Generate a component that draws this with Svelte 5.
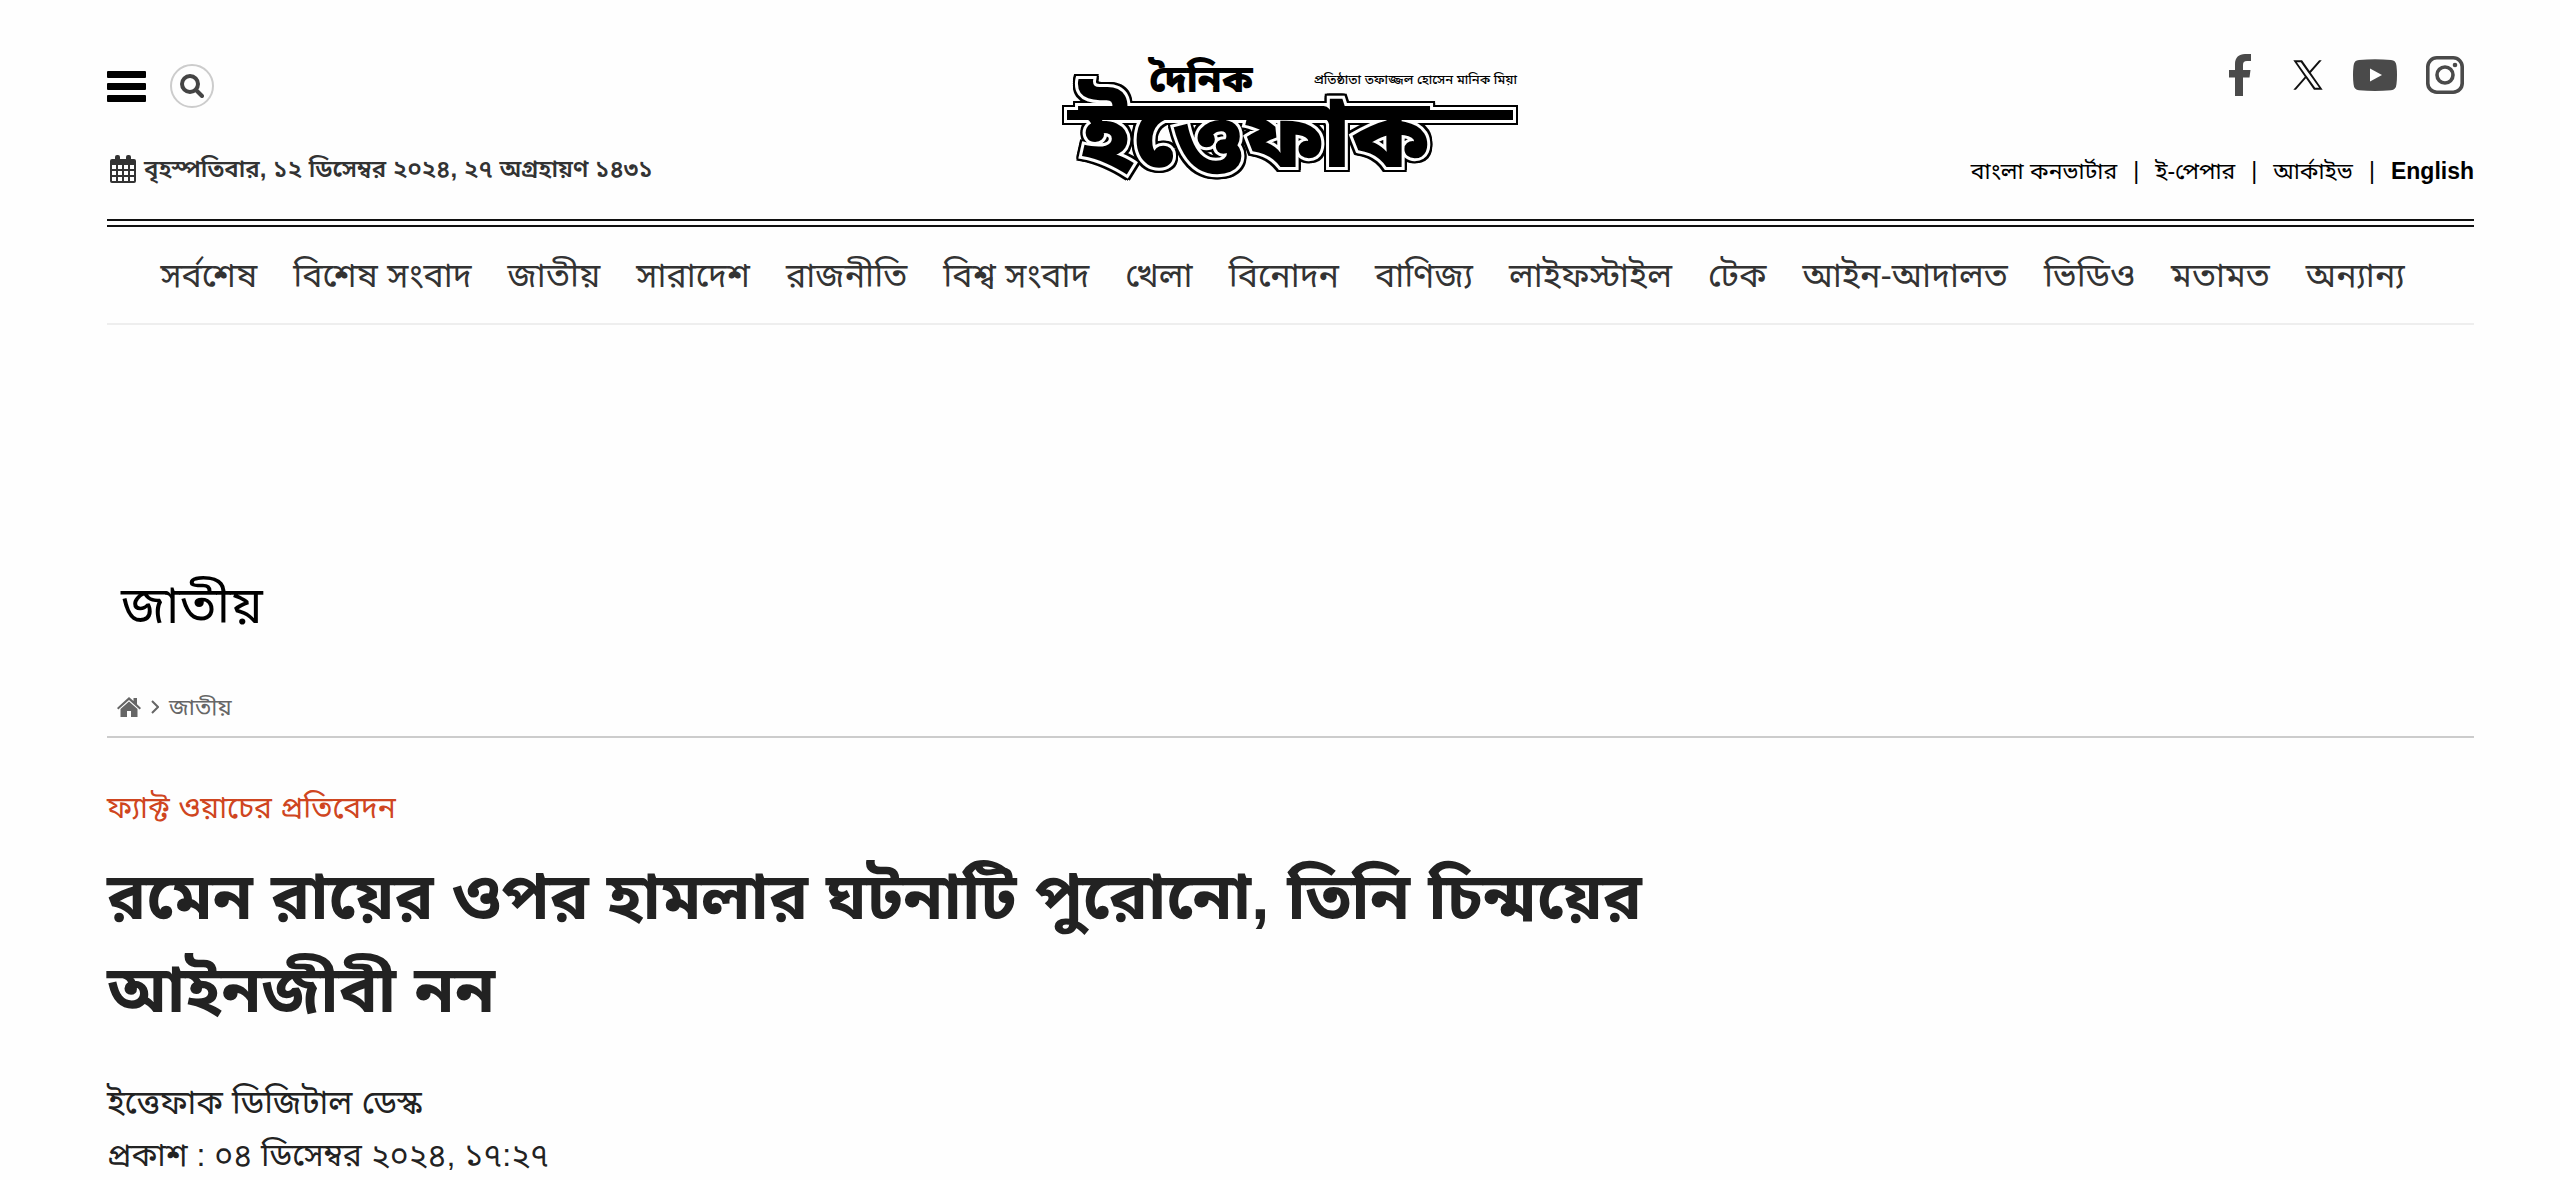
<script lang="ts">
  const navItems = [
    'সর্বশেষ', 'বিশেষ সংবাদ', 'জাতীয়', 'সারাদেশ', 'রাজনীতি',
    'বিশ্ব সংবাদ', 'খেলা', 'বিনোদন', 'বাণিজ্য', 'লাইফস্টাইল',
    'টেক', 'আইন-আদালত', 'ভিডিও', 'মতামত', 'অন্যান্য'
  ];

  const topLinks = ['বাংলা কনভার্টার', 'ই-পেপার', 'আর্কাইভ'];
</script>

<div class="page">
  <header class="masthead">
    <div class="tools">
      <div class="controls">
        <button class="menu" aria-label="মেনু">
          <span></span><span></span><span></span>
        </button>
        <button class="search" aria-label="অনুসন্ধান">
          <svg viewBox="0 0 24 24" width="24" height="24">
            <circle cx="10" cy="10" r="8" fill="none" stroke="#444" stroke-width="4" />
            <path d="M16 16 L22 22" stroke="#444" stroke-width="4" stroke-linecap="round" />
          </svg>
        </button>
      </div>
      <p class="today">
        <svg viewBox="0 0 26 28" width="26" height="28" fill="#333">
          <path fill-rule="evenodd" d="M2 4h3V2a2 2 0 0 1 2-2h1a2 2 0 0 1 2 2v2h6V2a2 2 0 0 1 2-2h1a2 2 0 0 1 2 2v2h3a2 2 0 0 1 2 2v20a2 2 0 0 1-2 2H2a2 2 0 0 1-2-2V6a2 2 0 0 1 2-2zM2 10v4h4v-4zM8 10v4h4v-4zM14 10v4h4v-4zM20 10v4h4v-4zM2 16v4h4v-4zM8 16v4h4v-4zM14 16v4h4v-4zM20 16v4h4v-4zM2 22v4h4v-4zM8 22v4h4v-4zM14 22v4h4v-4zM20 22v4h4v-4z" />
        </svg>
        <span>বৃহস্পতিবার, ১২ ডিসেম্বর ২০২৪, ২৭ অগ্রহায়ণ ১৪৩১</span>
      </p>
    </div>

    <a class="logo" href="/" aria-label="দৈনিক ইত্তেফাক">
      <svg viewBox="0 0 460 110" width="460" height="110">
        <text class="daily" x="88" y="26">দৈনিক</text>
        <text class="founder" x="456" y="18" text-anchor="end">প্রতিষ্ঠাতা তফাজ্জল হোসেন মানিক মিয়া</text>
        <g class="outlined">
          <path class="bar" d="M6 44H452V54H6z" />
          <text class="name" x="18" y="101">ইত্তেফাক</text>
          <path d="M6 44H452V54H6z" />
        </g>
      </svg>
    </a>

    <div class="links">
      <div class="social">
        <a href="/facebook" aria-label="Facebook">
          <svg viewBox="0 0 22 42" width="22" height="42" fill="#4a4a4a">
            <path d="M22 0v7h-4c-3 0-4 1.500-4 4v5h7.500l-1 7.500H14V42H6V23.500H0V16h6v-6C6 3.500 10 0 16 0c3 0 5 0 6 0z" />
          </svg>
        </a>
        <a href="/x" aria-label="X">
          <svg viewBox="0 0 24 24" width="32" height="32" fill="#111">
            <path d="M14.095 10.316 22.286 1h-1.940l-7.115 8.088L7.550 1H1l8.589 12.231L1 23h1.940l7.509-8.542L16.448 23H23l-8.905-12.684zm-2.658 3.022-.872-1.218L3.640 2.432h2.980l5.591 7.821.869 1.219 7.265 10.166h-2.982l-5.926-8.300z" />
          </svg>
        </a>
        <a href="/youtube" aria-label="YouTube">
          <svg viewBox="0 0 44 32" width="44" height="32">
            <path fill="#4a4a4a" d="M6 1Q22-.5 38 1Q43 1 43.500 7Q44.500 16 43.500 25Q43 31 38 31.300Q22 32.500 6 31.300Q1 31 .5 25Q-.5 16 .5 7Q1 1 6 1z" />
            <path fill="#fff" d="M17 9.500v13l12-6.500z" />
          </svg>
        </a>
        <a href="/instagram" aria-label="Instagram">
          <svg viewBox="0 0 38 38" width="38" height="38" fill="none" stroke="#4a4a4a" stroke-width="3.600">
            <rect x="1.800" y="1.800" width="34.400" height="34.400" rx="9" />
            <circle cx="19" cy="19" r="8" />
            <circle cx="29" cy="9" r="2.300" fill="#4a4a4a" stroke="none" />
          </svg>
        </a>
      </div>
      <ul class="top-links">
        {#each topLinks as link}
          <li><a href="/{link}">{link}</a></li>
        {/each}
        <li><a class="english" href="/en">English</a></li>
      </ul>
    </div>
  </header>

  <nav>
    {#each navItems as item}
      <a href="/{item}">{item}</a>
    {/each}
  </nav>

  <div class="ad-slot"></div>

  <main>
    <h2 class="section-title">জাতীয়</h2>

    <div class="breadcrumb">
      <a href="/" aria-label="প্রচ্ছদ">
        <svg viewBox="0 0 24 20" width="24" height="20" fill="#666">
          <path d="M12 0 L16.500 4V1H20v6.200L24 11l-1.300 1.400L12 3 1.300 12.400 0 11z" />
          <path d="M12 4.500 20.500 12v8H14v-6h-4v6H3.500v-8z" />
        </svg>
      </a>
      <svg viewBox="0 0 8 14" width="8" height="14" fill="none" stroke="#666" stroke-width="2">
        <path d="M1 1l6 6-6 6" />
      </svg>
      <a href="/national">জাতীয়</a>
    </div>

    <article>
      <p class="kicker">ফ্যাক্ট ওয়াচের প্রতিবেদন</p>
      <h1>রমেন রায়ের ওপর হামলার ঘটনাটি পুরোনো, তিনি চিন্ময়ের আইনজীবী নন</h1>
      <p class="byline">ইত্তেফাক ডিজিটাল ডেস্ক</p>
      <p class="published">প্রকাশ : ০৪ ডিসেম্বর ২০২৪, ১৭:২৭</p>
    </article>
  </main>
</div>

<style>
  :global(body) {
    background: #fefefe;
    color: #222;
    font-family: "Liberation Sans", "Noto Sans Bengali", "Noto Sans", sans-serif;
  }

  .page {
    margin: 0 86px 0 107px;
  }

  a {
    color: inherit;
    text-decoration: none;
  }

  svg {
    display: block;
  }

  p, h1, h2, ul {
    margin: 0;
    padding: 0;
  }

  .masthead {
    display: grid;
    grid-template-columns: 1fr auto 1fr;
    align-items: start;
    height: 219px;
    border-bottom: 2px solid #111;
  }

  .controls {
    display: flex;
    align-items: center;
    gap: 24px;
    margin-top: 64px;
  }

  .menu {
    display: flex;
    flex-direction: column;
    gap: 5px;
    width: 39px;
    padding: 0;
    border: 0;
    background: none;
  }

  .menu span {
    height: 7px;
    border-radius: 1px;
    background: #000;
  }

  .search {
    display: flex;
    align-items: center;
    justify-content: center;
    width: 44px;
    height: 44px;
    padding: 0;
    border: 2px solid #ccc;
    border-radius: 50%;
    background: none;
  }

  .today {
    display: flex;
    align-items: center;
    gap: 8px;
    margin-top: 41px;
    padding-left: 3px;
    font-size: 24px;
    line-height: 40px;
    font-weight: 600;
    color: #333;
  }

  .logo {
    margin-top: 66px;
  }

  .logo svg {
    overflow: visible;
  }

  .daily {
    font-size: 38px;
    font-weight: 900;
  }

  .founder {
    font-size: 13px;
    font-weight: 500;
  }

  .name {
    font-size: 96px;
    font-weight: 900;
  }

  .name,
  .bar {
    paint-order: stroke;
    stroke: #fff;
    stroke-width: 6px;
  }

  /* thin black edge round the white outline */
  .outlined {
    filter: drop-shadow(2px 0 #000) drop-shadow(-2px 0 #000)
      drop-shadow(0 2px #000) drop-shadow(0 -2px #000);
  }

  .links {
    display: flex;
    flex-direction: column;
    align-items: flex-end;
  }

  .social {
    display: flex;
    align-items: center;
    margin: 54px 10px 0 0;
    gap: 29px;
  }

  .social a:first-child {
    margin-right: 12px;
  }

  .top-links {
    display: flex;
    list-style: none;
    margin-top: 55px;
    font-size: 23px;
    line-height: 40px;
    color: #000;
  }

  .top-links li + li::before {
    content: "|";
    margin: 0 16px;
  }

  .english {
    font-weight: bold;
  }

  nav {
    display: flex;
    justify-content: center;
    gap: 36px;
    margin-top: 4px;
    padding-right: 16px;
    border-top: 2px solid #111;
    border-bottom: 2px solid #eee;
    font-size: 34px;
    line-height: 96px;
    white-space: nowrap;
    color: #333;
  }

  .ad-slot {
    height: 240px;
  }

  .section-title {
    padding-left: 14px;
    font-size: 52px;
    line-height: 80px;
    font-weight: normal;
    color: #000;
  }

  .breadcrumb {
    display: flex;
    align-items: center;
    gap: 10px;
    margin-top: 42px;
    padding: 0 0 9px 10px;
    border-bottom: 2px solid #ccc;
    font-size: 23px;
    line-height: 40px;
    color: #666;
  }

  article {
    max-width: 1560px;
  }

  .kicker {
    margin-top: 43px;
    font-size: 30px;
    line-height: 53px;
    color: #cf4520;
  }

  h1 {
    margin-top: 16px;
    font-size: 65px;
    line-height: 93px;
  }

  .byline {
    margin-top: 40px;
    font-size: 33px;
    line-height: 53px;
  }

  .published {
    font-size: 32px;
    line-height: 53px;
  }
</style>
